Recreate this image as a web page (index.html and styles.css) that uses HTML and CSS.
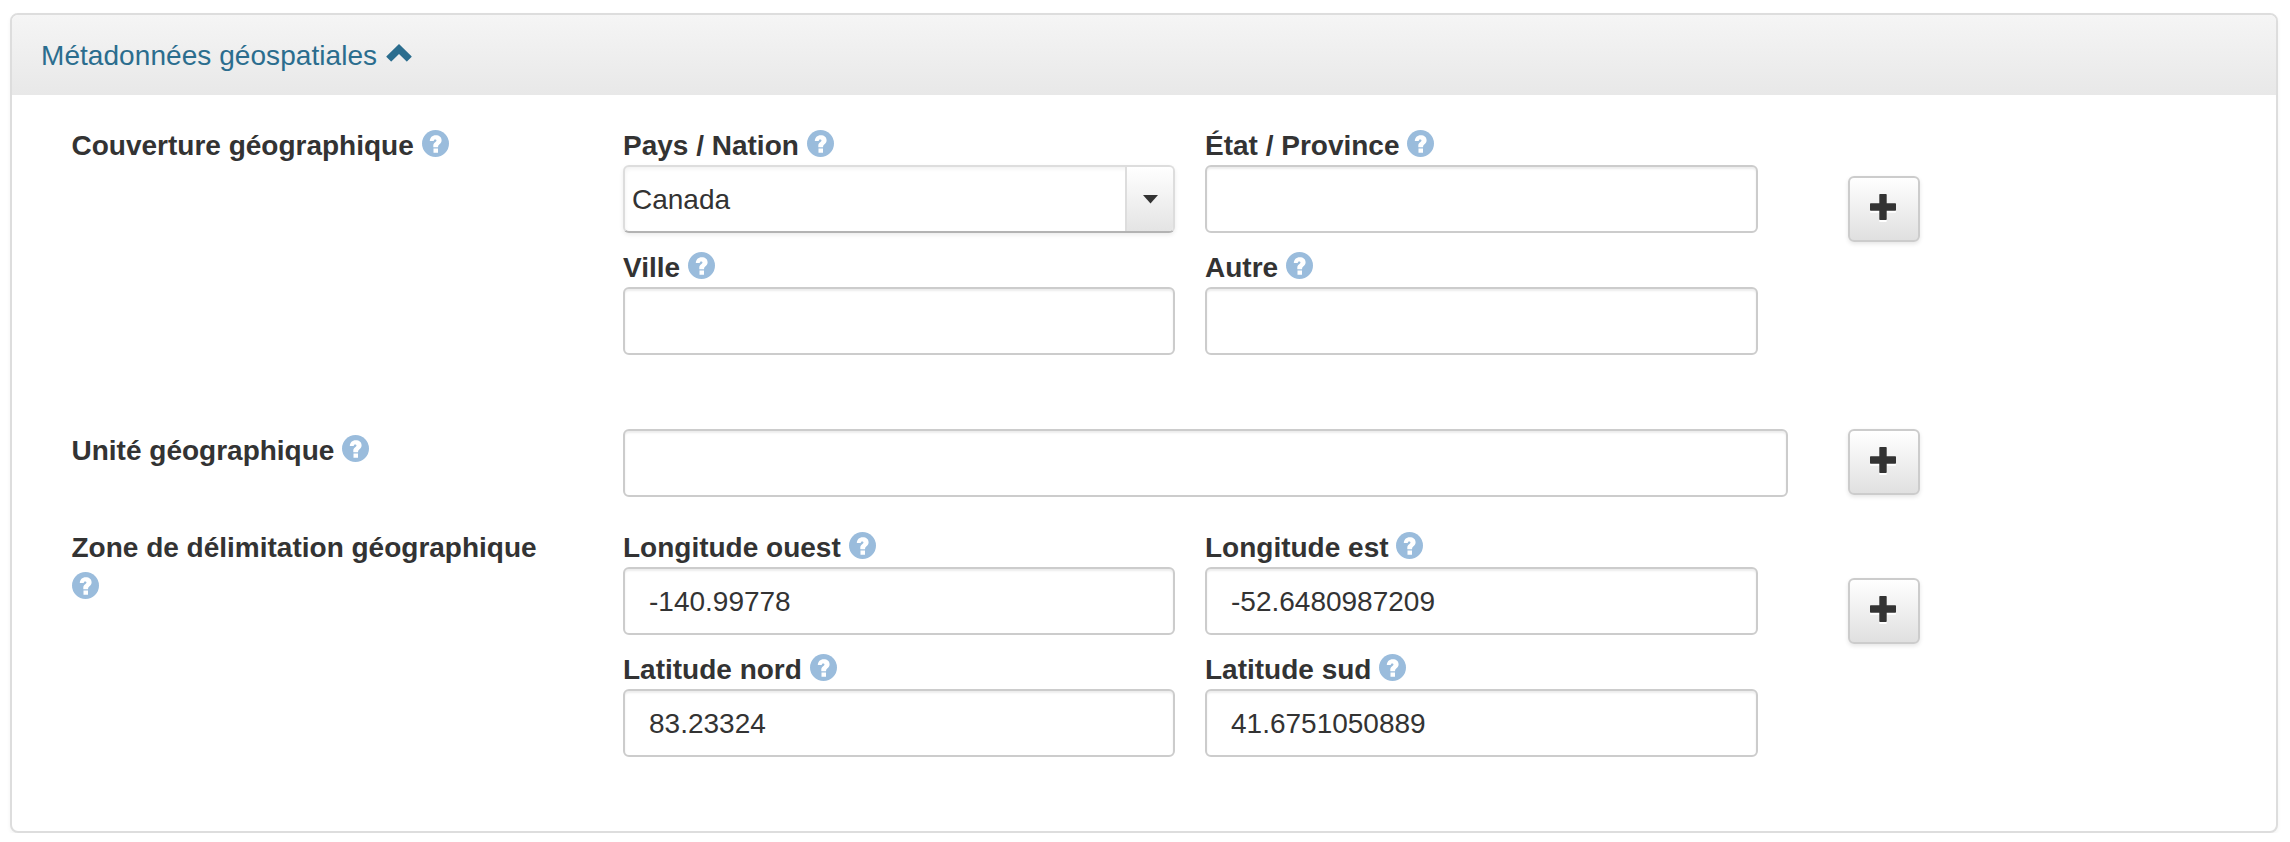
FILE: index.html
```html
<!DOCTYPE html>
<html lang="fr">
<head>
<meta charset="utf-8">
<title>Métadonnées géospatiales</title>
<link rel="stylesheet" href="styles.css">
</head>
<body>
<svg class="defs" width="0" height="0">
  <symbol id="help" viewBox="0 0 27 27"><circle cx="13.5" cy="13.5" r="13.5" fill="#9abcdc"/><path fill="#fff" d="M11.500 22.700v-4.200h4.500v4.200zM11.300 17.200v-1.400c0-3.300 3.200-3.600 3.200-5.200 0-.8-.5-1.200-1.300-1.200-1 0-1.400.6-1.500 1.700H7.800c.2-3.600 2.300-5.900 6-5.900 3.500 0 5.800 2 5.800 5 0 3.800-3.500 4.200-3.500 6.200v.8z"/></symbol>
  <symbol id="chevron" viewBox="0 0 26 18"><path fill="#2b6d8e" d="M13 0l12.500 12.300a.6.6 0 0 1 0 .8l-4.300 4.200a.6.6 0 0 1-.8 0L13 10l-7.400 7.300a.6.6 0 0 1-.8 0L.5 13.100a.6.6 0 0 1 0-.8z"/></symbol>
  <symbol id="plus" viewBox="0 0 26 28"><path id="cross" fill="#fff" transform="translate(0 2)" d="M10 0h6a.7.700 0 0 1 .7.700v8.600h8.600a.7.700 0 0 1 .7.700v6a.7.700 0 0 1-.7.700h-8.600v8.600a.7.700 0 0 1-.7.700h-6a.7.700 0 0 1-.7-.7v-8.600H.7A.7.700 0 0 1 0 16v-6a.7.700 0 0 1 .7-.7h8.600V.7A.7.700 0 0 1 10 0z"/><path fill="#333" d="M10 0h6a.7.700 0 0 1 .7.700v8.600h8.600a.7.700 0 0 1 .7.700v6a.7.700 0 0 1-.7.700h-8.600v8.600a.7.700 0 0 1-.7.700h-6a.7.700 0 0 1-.7-.7v-8.600H.7A.7.700 0 0 1 0 16v-6a.7.700 0 0 1 .7-.7h8.600V.7A.7.700 0 0 1 10 0z"/></symbol>
</svg>
<section class="panel">
  <header class="panel-heading">Métadonnées géospatiales <svg class="chevron"><use href="#chevron"/></svg></header>
  <div class="panel-body">
    <div class="row row-coverage">
      <div class="title">Couverture géographique <svg class="help"><use href="#help"/></svg></div>
      <div class="fields">
        <div class="field"><label>Pays / Nation <svg class="help"><use href="#help"/></svg></label><div class="select"><span class="value">Canada</span><span class="trigger"><svg width="15" height="10" viewBox="0 0 15 10"><path fill="#333" d="M0 1h15L7.500 9.500z"/></svg></span></div></div>
        <div class="field"><label>État / Province <svg class="help"><use href="#help"/></svg></label><div class="input"></div></div>
        <div class="field"><label>Ville <svg class="help"><use href="#help"/></svg></label><div class="input"></div></div>
        <div class="field"><label>Autre <svg class="help"><use href="#help"/></svg></label><div class="input"></div></div>
      </div>
      <button class="add" type="button" aria-label="Ajouter"><svg class="plus"><use href="#plus"/></svg></button>
    </div>
    <div class="row row-unit">
      <div class="title">Unité géographique <svg class="help"><use href="#help"/></svg></div>
      <div class="fields-single"><div class="input"></div></div>
      <button class="add" type="button" aria-label="Ajouter"><svg class="plus"><use href="#plus"/></svg></button>
    </div>
    <div class="row row-box">
      <div class="title">Zone de délimitation géographique <svg class="help"><use href="#help"/></svg></div>
      <div class="fields">
        <div class="field"><label>Longitude ouest <svg class="help"><use href="#help"/></svg></label><div class="input">-140.99778</div></div>
        <div class="field"><label>Longitude est <svg class="help"><use href="#help"/></svg></label><div class="input">-52.6480987209</div></div>
        <div class="field"><label>Latitude nord <svg class="help"><use href="#help"/></svg></label><div class="input">83.23324</div></div>
        <div class="field"><label>Latitude sud <svg class="help"><use href="#help"/></svg></label><div class="input">41.6751050889</div></div>
      </div>
      <button class="add" type="button" aria-label="Ajouter"><svg class="plus"><use href="#plus"/></svg></button>
    </div>
  </div>
</section>
</body>
</html>
```

FILE: styles.css
```css
* { box-sizing: border-box; }

body {
  margin: 0;
  padding: 13px 12px 0 10px;
  background: #fff;
  color: #333;
  font: 28px/40px "Liberation Sans", Arial, sans-serif;
}

.defs { display: block; }

.panel {
  height: 820px;
  border: 2px solid #ddd;
  border-radius: 8px;
  box-shadow: 0 2px 4px rgba(0, 0, 0, .05);
  background: #fff;
}

.panel-heading {
  height: 80px;
  padding: 21px 29px;
  border-radius: 6px 6px 0 0;
  background: linear-gradient(#f5f5f5, #e8e8e8);
  color: #2b6d8e;
  letter-spacing: .06px;
}

.chevron { width: 26px; height: 18px; margin-left: 1px; vertical-align: 3px; }

.panel-body { padding: 30px 60px 0; }

.row {
  display: grid;
  grid-template-columns: 551px 1165px 132px;
  align-items: start;
}

.row-coverage { height: 304px; }
.row-unit { height: 98px; }
.row-coverage .add, .row-box .add { margin-top: 51px; }

.title, label {
  display: block;
  padding-top: 1px;
  font-weight: bold;
}

.title { width: 480px; margin-left: -.5px; }
.row-unit .title { padding-top: 2px; }

.help {
  width: 27px;
  height: 27px;
  vertical-align: -1.5px;
}

label { height: 40px; white-space: nowrap; }

.fields {
  display: grid;
  grid-template-columns: 552px 553px;
  gap: 14px 30px;
}

.input, .select {
  height: 68px;
  border: 2px solid #ccc;
  border-radius: 6px;
  background: #fff;
  box-shadow: inset 0 2px 2px rgba(0, 0, 0, .075);
}

.input { padding: 13px 24px; }

.select {
  display: flex;
  overflow: hidden;
  border-color: #ddd #ddd #b3b3b3;
  box-shadow: inset 0 2px 4px rgba(0, 0, 0, .06), 0 2px 4px rgba(0, 0, 0, .08);
}

.value { flex: 1; padding: 13px 7px; }

.trigger {
  display: flex;
  width: 48px;
  align-items: center;
  justify-content: center;
  border-left: 2px solid #ddd;
  background: linear-gradient(#fff, #e4e4e4);
}

.add {
  display: flex;
  width: 72px;
  height: 66px;
  margin-left: 60px;
  padding: 16px 20px;
  border: 2px solid #ccc;
  border-radius: 6px;
  background: linear-gradient(#fff, #e0e0e0);
  box-shadow: 0 2px 4px rgba(0, 0, 0, .1);
}

.plus { width: 26px; height: 28px; flex: none; }
```
